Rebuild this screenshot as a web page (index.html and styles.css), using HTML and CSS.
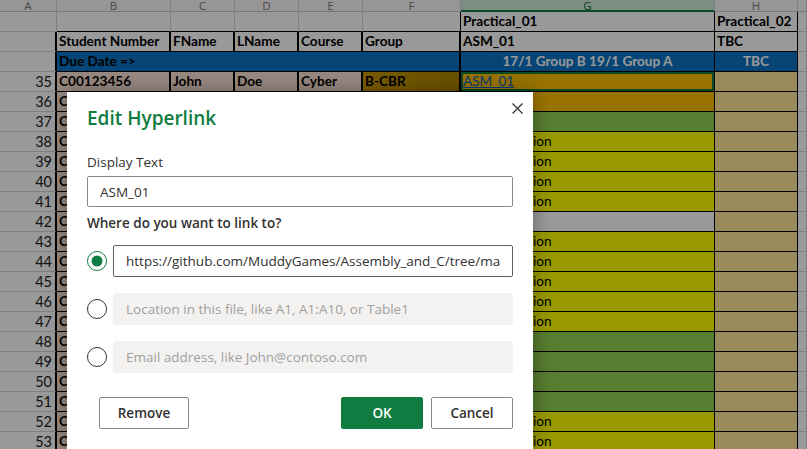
FILE: index.html
```html
<!DOCTYPE html>
<html lang="en">
<head>
<meta charset="utf-8">
<title>Edit Hyperlink</title>
<link rel="stylesheet" href="styles.css">
</head>
<body>
<div class="sheet">
  <div class="ch">A</div><div class="ch">B</div><div class="ch">C</div><div class="ch">D</div><div class="ch">E</div><div class="ch">F</div><div class="ch ch-sel">G</div><div class="ch">H</div><div class="ch"></div>

  <div class="c"></div><div class="c kb"></div><div class="c kb"></div><div class="c kb"></div><div class="c kb"></div><div class="c kb kr"></div><div class="c hd k">Practical_01</div><div class="c hd k">Practical_02</div><div class="c"></div>

  <div class="c kr w"></div><div class="c hd k w">Student Number</div><div class="c hd k w">FName</div><div class="c hd k w">LName</div><div class="c hd k w">Course</div><div class="c hd k w">Group</div><div class="c hd k">ASM_01</div><div class="c hd k">TBC</div><div class="c"></div>

  <div class="c kr w"></div><div class="c hd k w due span5">Due Date =&gt;</div><div class="c hd k due ctr light">17/1 Group B 19/1 Group A</div><div class="c hd k due ctr light">TBC</div><div class="c"></div>

  <div class="c num kr w">35</div><div class="c hd k w pink">C00123456</div><div class="c hd k w pink">John</div><div class="c hd k w pink">Doe</div><div class="c hd k w pink">Cyber</div><div class="c hd k w gold">B-CBR</div><div class="c k orange selcell"><span class="link">ASM_01</span></div><div class="c k tan"></div><div class="c"></div>

  <div class="c num kr w">36</div><div class="c hd k w pink">C00123457</div><div class="c k w pink"></div><div class="c k w pink"></div><div class="c k w pink"></div><div class="c k w gold"></div><div class="c k orange"></div><div class="c k tan"></div><div class="c"></div>
  <div class="c num kr w">37</div><div class="c hd k w pink">C00123458</div><div class="c k w pink"></div><div class="c k w pink"></div><div class="c k w pink"></div><div class="c k w gold"></div><div class="c k green"></div><div class="c k tan"></div><div class="c"></div>
  <div class="c num kr w">38</div><div class="c hd k w pink">C00123459</div><div class="c k w pink"></div><div class="c k w pink"></div><div class="c k w pink"></div><div class="c k w gold"></div><div class="c k yellow">No Submission</div><div class="c k tan"></div><div class="c"></div>
  <div class="c num kr w">39</div><div class="c hd k w pink">C00123460</div><div class="c k w pink"></div><div class="c k w pink"></div><div class="c k w pink"></div><div class="c k w gold"></div><div class="c k yellow">No Submission</div><div class="c k tan"></div><div class="c"></div>
  <div class="c num kr w">40</div><div class="c hd k w pink">C00123461</div><div class="c k w pink"></div><div class="c k w pink"></div><div class="c k w pink"></div><div class="c k w gold"></div><div class="c k yellow">No Submission</div><div class="c k tan"></div><div class="c"></div>
  <div class="c num kr w">41</div><div class="c hd k w pink">C00123462</div><div class="c k w pink"></div><div class="c k w pink"></div><div class="c k w pink"></div><div class="c k w gold"></div><div class="c k yellow">No Submission</div><div class="c k tan"></div><div class="c"></div>
  <div class="c num kr w">42</div><div class="c hd k w pink">C00123463</div><div class="c k w pink"></div><div class="c k w pink"></div><div class="c k w pink"></div><div class="c k w gold"></div><div class="c k"></div><div class="c k tan"></div><div class="c"></div>
  <div class="c num kr w">43</div><div class="c hd k w pink">C00123464</div><div class="c k w pink"></div><div class="c k w pink"></div><div class="c k w pink"></div><div class="c k w gold"></div><div class="c k yellow">No Submission</div><div class="c k tan"></div><div class="c"></div>
  <div class="c num kr w">44</div><div class="c hd k w pink">C00123465</div><div class="c k w pink"></div><div class="c k w pink"></div><div class="c k w pink"></div><div class="c k w gold"></div><div class="c k yellow">No Submission</div><div class="c k tan"></div><div class="c"></div>
  <div class="c num kr w">45</div><div class="c hd k w pink">C00123466</div><div class="c k w pink"></div><div class="c k w pink"></div><div class="c k w pink"></div><div class="c k w gold"></div><div class="c k yellow">No Submission</div><div class="c k tan"></div><div class="c"></div>
  <div class="c num kr w">46</div><div class="c hd k w pink">C00123467</div><div class="c k w pink"></div><div class="c k w pink"></div><div class="c k w pink"></div><div class="c k w gold"></div><div class="c k yellow">No Submission</div><div class="c k tan"></div><div class="c"></div>
  <div class="c num kr w">47</div><div class="c hd k w pink">C00123468</div><div class="c k w pink"></div><div class="c k w pink"></div><div class="c k w pink"></div><div class="c k w gold"></div><div class="c k yellow">No Submission</div><div class="c k tan"></div><div class="c"></div>
  <div class="c num kr w">48</div><div class="c hd k w pink">C00123469</div><div class="c k w pink"></div><div class="c k w pink"></div><div class="c k w pink"></div><div class="c k w gold"></div><div class="c k green"></div><div class="c k tan"></div><div class="c"></div>
  <div class="c num kr w">49</div><div class="c hd k w pink">C00123470</div><div class="c k w pink"></div><div class="c k w pink"></div><div class="c k w pink"></div><div class="c k w gold"></div><div class="c k green"></div><div class="c k tan"></div><div class="c"></div>
  <div class="c num kr w">50</div><div class="c hd k w pink">C00123471</div><div class="c k w pink"></div><div class="c k w pink"></div><div class="c k w pink"></div><div class="c k w gold"></div><div class="c k green"></div><div class="c k tan"></div><div class="c"></div>
  <div class="c num kr w">51</div><div class="c hd k w pink">C00123472</div><div class="c k w pink"></div><div class="c k w pink"></div><div class="c k w pink"></div><div class="c k w gold"></div><div class="c k green"></div><div class="c k tan"></div><div class="c"></div>
  <div class="c num kr w">52</div><div class="c hd k w pink">C00123473</div><div class="c k w pink"></div><div class="c k w pink"></div><div class="c k w pink"></div><div class="c k w gold"></div><div class="c k yellow">No Submission</div><div class="c k tan"></div><div class="c"></div>
  <div class="c num kr w">53</div><div class="c hd k w pink">C00123474</div><div class="c k w pink"></div><div class="c k w pink"></div><div class="c k w pink"></div><div class="c k w gold"></div><div class="c k yellow">No Submission</div><div class="c k tan"></div><div class="c"></div>
</div>

<div class="backdrop"></div>

<div class="dialog" role="dialog" aria-label="Edit Hyperlink">
  <div class="dlg-head">
    <h1 class="dlg-title">Edit Hyperlink</h1>
    <button class="close" aria-label="Close">
      <svg width="11" height="11" viewBox="0 0 11 11"><path d="M0.5 0.5 L10.5 10.5 M10.5 0.5 L0.5 10.5" stroke="#323130" stroke-width="1.2" fill="none"/></svg>
    </button>
  </div>
  <div class="label">Display Text</div>
  <div class="field"><span class="val">ASM_01</span></div>
  <div class="question">Where do you want to link to?</div>
  <div class="options">
    <div class="opt">
      <svg class="radio" width="20" height="20" viewBox="0 0 20 20"><circle cx="10" cy="10" r="9.5" fill="#fff" stroke="#107c41"/><circle cx="10" cy="10" r="5.5" fill="#107c41"/></svg>
      <div class="field dark"><span class="val">https://github.com/MuddyGames/Assembly_and_C/tree/main</span></div>
    </div>
    <div class="opt">
      <svg class="radio" width="20" height="20" viewBox="0 0 20 20"><circle cx="10" cy="10" r="9.5" fill="#fff" stroke="#323130"/></svg>
      <div class="field empty"><span class="val">Location in this file, like A1, A1:A10, or Table1</span></div>
    </div>
    <div class="opt">
      <svg class="radio" width="20" height="20" viewBox="0 0 20 20"><circle cx="10" cy="10" r="9.5" fill="#fff" stroke="#323130"/></svg>
      <div class="field empty"><span class="val">Email address, like John@contoso.com</span></div>
    </div>
  </div>
  <div class="buttons">
    <button class="btn remove">Remove</button>
    <button class="btn ok">OK</button>
    <button class="btn cancel">Cancel</button>
  </div>
</div>
</body>
</html>
```
FILE: styles.css
```css
html, body {
  margin: 0;
  padding: 0;
}
body {
  width: 807px;
  height: 449px;
  overflow: hidden;
  position: relative;
  background: #fff;
}

/* ---------- spreadsheet ---------- */
.sheet {
  display: grid;
  grid-template-columns: 57px 114px 64px 64px 64px 98px 254px 83px 9px;
  grid-template-rows: 12px;
  grid-auto-rows: 20px;
  font-family: Lato, "Liberation Sans", sans-serif;
  font-size: 13.6px;
  color: #000;
}
.ch {
  box-sizing: border-box;
  border-right: 1px solid #d4d4d4;
  border-bottom: 1px solid #c4c4c4;
  background: #fafafa;
  text-align: center;
  font-family: "Open Sans", sans-serif;
  font-size: 11.5px;
  line-height: 11px;
  color: #7a7a7a;
}
.ch-sel {
  background: #d3ecdc;
  border-bottom: 2px solid #107c41;
  color: #0e6b38;
}
.c {
  box-sizing: border-box;
  border-right: 1px solid #d4d4d4;
  border-bottom: 1px solid #d4d4d4;
  padding: 0 2px;
  line-height: 19px;
  white-space: nowrap;
  overflow: hidden;
}
.hd { font-weight: 700; }
.k { border-right-color: #000; border-bottom-color: #000; }
.kb { border-bottom-color: #000; }
.kr { border-right-color: #000; }
.w { border-right-width: 2px; }
.num {
  text-align: right;
  padding-right: 3px;
  color: #222;
  font-size: 14.5px;
}
.span5 { grid-column: span 5; }
.due { background: #0b74c4; }
.ctr { text-align: center; }
.light { color: #fff; }
.pink { background: #fce4d6; }
.gold { background: linear-gradient(90deg, #cc9a00, #b08400); }
.orange { background: #ffc000; }
.green { background: #92d050; }
.yellow { background: #ffff00; }
.tan { background: #ffe699; }
.selcell { box-shadow: inset 0 0 0 2px #107c41; }
.link {
  color: #0563c1;
  text-decoration: underline;
}

/* ---------- modal ---------- */
.backdrop {
  position: absolute;
  inset: 0;
  background: rgba(0, 0, 0, 0.4);
}
.dialog {
  position: absolute;
  left: 67px;
  top: 92px;
  width: 466px;
  box-sizing: border-box;
  padding: 12px 20px 24px;
  background: #fff;
  box-shadow: 0 0 18px rgba(0, 0, 0, 0.35);
  font-family: "Open Sans", "Noto Sans", sans-serif;
  font-size: 13.5px;
  color: #323130;
}
.dlg-head {
  display: flex;
  justify-content: space-between;
  align-items: flex-start;
}
.dlg-title {
  margin: 0;
  font-size: 19px;
  font-weight: 600;
  line-height: 28px;
  color: #107c41;
}
.close {
  width: 24px;
  height: 24px;
  margin: -8px -16px 0 0;
  padding: 0;
  border: 0;
  background: none;
  display: flex;
  align-items: center;
  justify-content: center;
}
.label {
  margin-top: 20px;
  line-height: 20px;
}
.field {
  box-sizing: border-box;
  margin-top: 4px;
  height: 31px;
  border: 1px solid #8a8886;
  border-radius: 2px;
  padding: 0 12px;
  display: flex;
  align-items: center;
  min-width: 0;
}
.val {
  display: block;
  overflow: hidden;
  white-space: nowrap;
  line-height: 20px;
}
.question {
  margin-top: 6px;
  font-weight: 600;
  line-height: 20px;
}
.options {
  margin-top: 12px;
  display: flex;
  flex-direction: column;
  gap: 16px;
}
.opt {
  display: flex;
  align-items: center;
  gap: 6px;
}
.radio { flex: none; }
.opt .field {
  flex: 1;
  margin: 0;
  height: 32px;
}
.field.dark { border-color: #605e5c; }
.field.empty {
  background: #f3f2f1;
  border-color: #f3f2f1;
  color: #a19f9d;
}
.buttons {
  margin-top: 24px;
  display: flex;
  gap: 8px;
}
.btn {
  height: 32px;
  box-sizing: border-box;
  border: 1px solid #8a8886;
  border-radius: 2px;
  background: #fff;
  font-family: "Open Sans", sans-serif;
  font-size: 13.5px;
  font-weight: 600;
  color: #323130;
  padding: 0;
}
.remove {
  width: 90px;
  margin-left: 12px;
  margin-right: auto;
}
.ok {
  width: 82px;
  background: #107c41;
  border-color: #107c41;
  color: #fff;
}
.cancel { width: 82px; }
```
